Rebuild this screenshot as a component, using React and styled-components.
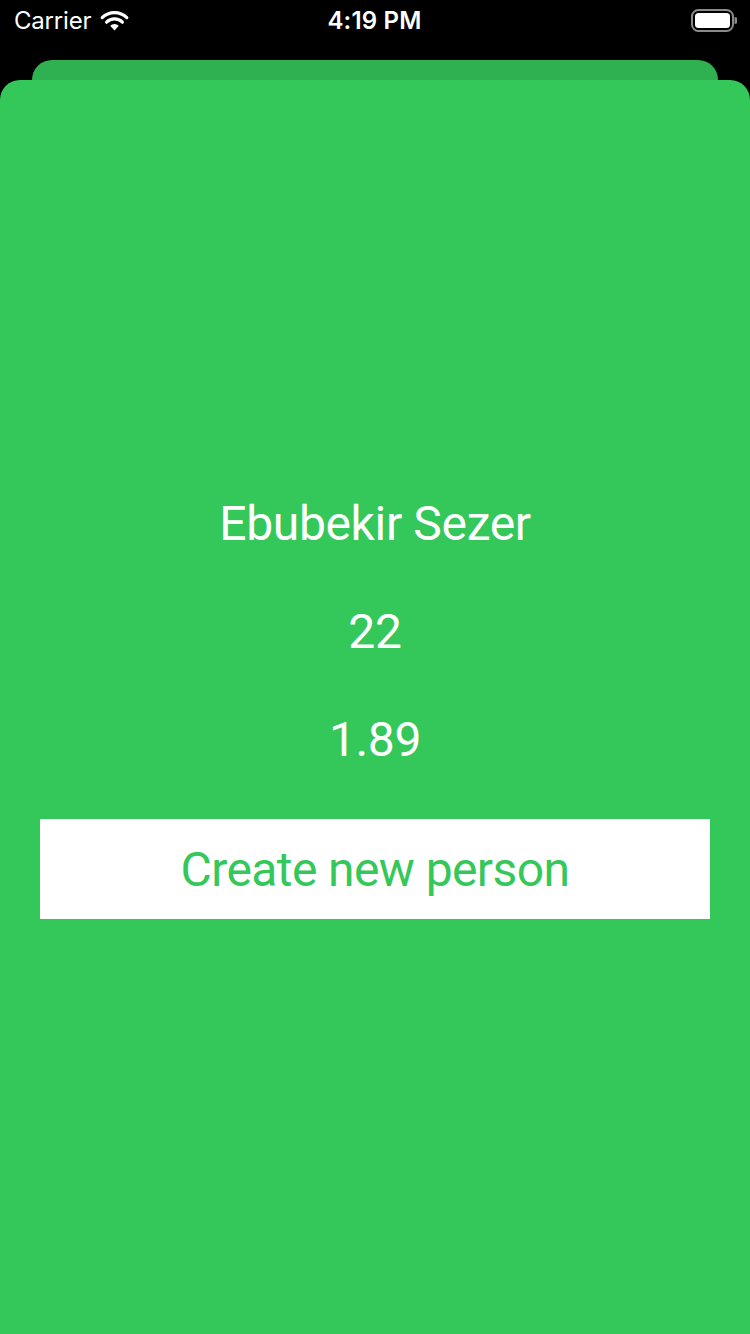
import React from "react";
import styled, { createGlobalStyle } from "styled-components";

const Global = createGlobalStyle`
  html, body { margin: 0; padding: 0; background: #000; }
  body { font-family: Inter, "Noto Sans", "Liberation Sans", sans-serif; -webkit-font-smoothing: antialiased; }
  * { box-sizing: border-box; }
`;

const Screen = styled.div`
  width: 750px;
  height: 1334px;
  background: #000;
  display: flex;
  flex-direction: column;
  overflow: hidden;
`;

const StatusBar = styled.div`
  height: 40px;
  display: grid;
  grid-template-columns: 1fr auto 1fr;
  align-items: center;
  padding: 0 13px 0 14px;
  color: #fff;
  font-size: 24px;
`;

const Left = styled.div`
  display: flex;
  align-items: center;
  gap: 8px;
  letter-spacing: -0.2px;
`;

const Time = styled.div`
  font-weight: 600;
  letter-spacing: 0.2px;
  padding-right: 2px;
`;

const Right = styled.div`
  display: flex;
  justify-content: flex-end;
  align-items: center;
`;

const BackCard = styled.div`
  margin: 20px 32px 0;
  height: 20px;
  background: #2fb151;
  border-radius: 20px 20px 0 0;
`;

const Card = styled.div`
  flex: 1;
  background: #34c759;
  border-radius: 20px 20px 0 0;
  display: flex;
  flex-direction: column;
  align-items: center;
  justify-content: center;
  padding: 0 40px;
  gap: 50px;
`;

const Label = styled.div`
  color: #fff;
  font-family: Roboto, Inter, sans-serif;
  font-size: 48px;
  line-height: 58px;
  height: 58px;
  letter-spacing: -0.35px;
  text-align: center;
`;

const Button = styled.button`
  width: 100%;
  height: 100px;
  background: #fff;
  border: none;
  border-radius: 0;
  color: #34c759;
  font-family: Roboto, Inter, sans-serif;
  font-size: 48px;
  letter-spacing: -0.6px;
  padding: 0;
  cursor: pointer;
`;

const Wifi = () => (
  <svg width="31" height="22" viewBox="0 0 31 22">
    <path d="M15.5 21.5 L11.2 16.8 A6.2 6.2 0 0 1 19.8 16.8 Z" fill="#fff" />
    <path d="M7.6 13.2 A11.2 11.2 0 0 1 23.4 13.2" stroke="#fff" strokeWidth="3.2" fill="none" strokeLinecap="round" />
    <path d="M3.2 8.6 A17.5 17.5 0 0 1 27.8 8.6" stroke="#fff" strokeWidth="3.2" fill="none" strokeLinecap="round" />
  </svg>
);

const Battery = () => (
  <svg width="46" height="23" viewBox="0 0 46 23">
    <rect x="1" y="1" width="41" height="21" rx="6.5" fill="none" stroke="#8a8a8a" strokeWidth="2" />
    <rect x="4" y="4" width="35" height="15" rx="3.5" fill="#fff" />
    <path d="M43.5 8 A3.5 3.5 0 0 1 43.5 15 Z" fill="#8a8a8a" />
  </svg>
);

export default function App() {
  return (
    <>
      <Global />
      <Screen>
        <StatusBar>
          <Left>
            <span>Carrier</span>
            <Wifi />
          </Left>
          <Time>4:19 PM</Time>
          <Right>
            <Battery />
          </Right>
        </StatusBar>
        <BackCard />
        <Card>
          <Label>Ebubekir Sezer</Label>
          <Label>22</Label>
          <Label>1.89</Label>
          <Button>Create new person</Button>
        </Card>
      </Screen>
    </>
  );
}
